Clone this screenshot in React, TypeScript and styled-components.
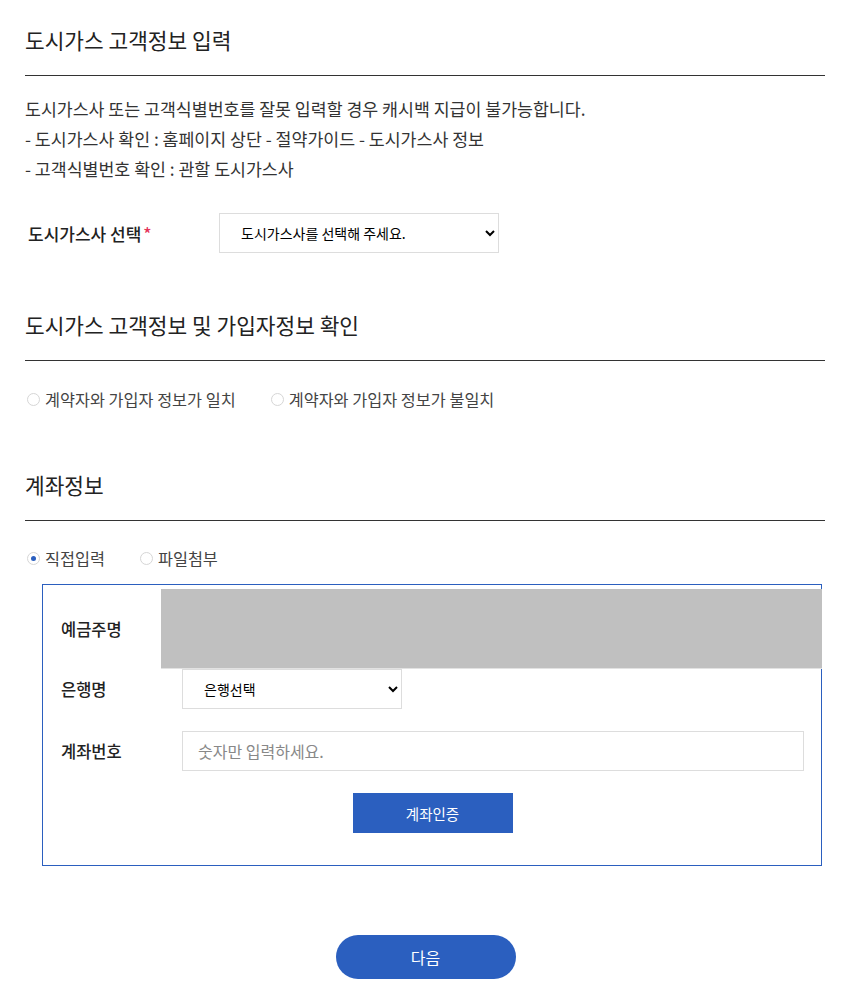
import React from 'react';
import styled, { createGlobalStyle } from 'styled-components';

const GlobalStyle = createGlobalStyle`
  body {
    margin: 0;
    background: #fff;
    font-family: 'Noto Sans CJK KR', 'Noto Sans', sans-serif;
    color: #333;
  }
`;

const Page = styled.div`
  width: 800px;
  padding: 0 26px 20px 25px;
`;

const SectionTitle = styled.h2<{ top: number }>`
  margin: ${p => p.top}px 0 0;
  padding-bottom: 20px;
  border-bottom: 1px solid #333;
  font-size: 21.4px;
  font-weight: 400;
  line-height: 30px;
  color: #222;
`;

const Notice = styled.div`
  margin-top: 18px;
  font-size: 17.3px;
  line-height: 30px;
  color: #333;
`;

const FieldRow = styled.div`
  display: flex;
  align-items: center;
  margin-top: 29px;
`;

const FieldLabel = styled.label`
  width: 191px;
  padding-left: 3px;
  font-size: 17px;
  font-weight: 500;
  color: #222;
`;

const Required = styled.span`
  color: #e4335a;
  margin-left: 2px;
`;

const Select = styled.select<{ w: number }>`
  width: ${p => p.w}px;
  height: 40px;
  padding: 0 12px 0 17px;
  border: 1px solid #ddd;
  background: #fff;
  font-family: 'Noto Sans CJK KR', sans-serif;
  font-size: 14px;
  color: #000;
  outline: none;
`;

const RadioGroup = styled.div<{ top: number }>`
  display: flex;
  align-items: center;
  margin-top: ${p => p.top}px;
  height: 24px;
`;

const RadioOption = styled.label<{ gap: number }>`
  display: flex;
  align-items: center;
  margin-right: ${p => p.gap}px;
  font-size: 16.3px;
  color: #444;
  cursor: pointer;
`;

const RadioMark = styled.span<{ checked?: boolean }>`
  width: 13px;
  height: 13px;
  margin: 0 5px 0 2px;
  box-sizing: border-box;
  border: 1px solid #d6d6d6;
  border-radius: 50%;
  display: flex;
  align-items: center;
  justify-content: center;
  &::after {
    content: '';
    width: 5px;
    height: 5px;
    border-radius: 50%;
    background: ${p => (p.checked ? '#2b5fbf' : 'transparent')};
  }
`;

const AccountBox = styled.div`
  margin: 14px 3px 0 17px;
  border: 1px solid #2b5fbf;
  padding: 4px 17px 32px 18px;
`;

const AccountRow = styled.div<{ top?: number }>`
  display: flex;
  align-items: center;
  margin-top: ${p => p.top ?? 0}px;
`;

const AccountLabel = styled.span`
  width: 121px;
  flex-shrink: 0;
  font-size: 16.5px;
  font-weight: 500;
  color: #222;
`;

const Masked = styled.div`
  flex: 1;
  height: 79px;
  margin: 0 -18px 0 -21px;
  background: #c0c0c0;
  border-bottom: 1px solid #e2e2e2;
`;

const TextInput = styled.input`
  flex: 1;
  height: 40px;
  box-sizing: border-box;
  padding: 0 15px;
  border: 1px solid #ddd;
  font-family: 'Noto Sans CJK KR', sans-serif;
  font-size: 16px;
  outline: none;
  &::placeholder {
    color: #888;
  }
`;

const ButtonRow = styled.div`
  display: flex;
  justify-content: center;
  margin-top: 22px;
`;

const VerifyButton = styled.button`
  width: 160px;
  height: 40px;
  border: 0;
  background: #2b5fbf;
  color: #fff;
  font-family: 'Noto Sans CJK KR', sans-serif;
  font-size: 14.5px;
  cursor: pointer;
`;

const Footer = styled.div`
  display: flex;
  justify-content: center;
  margin: 69px 0 0;
  padding-left: 1px;
`;

const NextButton = styled.button`
  width: 180px;
  height: 44px;
  border: 0;
  border-radius: 22px;
  background: #2b5fbf;
  color: #fff;
  font-family: 'Noto Sans CJK KR', sans-serif;
  font-size: 16px;
  cursor: pointer;
`;

function App() {
  return (
    <Page>
      <GlobalStyle />
      <SectionTitle top={25}>도시가스 고객정보 입력</SectionTitle>
      <Notice>
        도시가스사 또는 고객식별번호를 잘못 입력할 경우 캐시백 지급이 불가능합니다.
        <br />- 도시가스사 확인 : 홈페이지 상단 - 절약가이드 - 도시가스사 정보
        <br />- 고객식별번호 확인 : 관할 도시가스사
      </Notice>
      <FieldRow>
        <FieldLabel>
          도시가스사 선택<Required>*</Required>
        </FieldLabel>
        <Select w={280} defaultValue="">
          <option value="">도시가스사를 선택해 주세요.</option>
        </Select>
      </FieldRow>

      <SectionTitle top={57}>도시가스 고객정보 및 가입자정보 확인</SectionTitle>
      <RadioGroup top={26}>
        <RadioOption gap={33}>
          <RadioMark />
          계약자와 가입자 정보가 일치
        </RadioOption>
        <RadioOption gap={33}>
          <RadioMark />
          계약자와 가입자 정보가 불일치
        </RadioOption>
      </RadioGroup>

      <SectionTitle top={59}>계좌정보</SectionTitle>
      <RadioGroup top={25}>
        <RadioOption gap={33}>
          <RadioMark checked />
          직접입력
        </RadioOption>
        <RadioOption gap={33}>
          <RadioMark />
          파일첨부
        </RadioOption>
      </RadioGroup>

      <AccountBox>
        <AccountRow>
          <AccountLabel>예금주명</AccountLabel>
          <Masked />
        </AccountRow>
        <AccountRow>
          <AccountLabel>은행명</AccountLabel>
          <Select w={220} defaultValue="">
            <option value="">은행선택</option>
          </Select>
        </AccountRow>
        <AccountRow top={22}>
          <AccountLabel>계좌번호</AccountLabel>
          <TextInput placeholder="숫자만 입력하세요." />
        </AccountRow>
        <ButtonRow>
          <VerifyButton>계좌인증</VerifyButton>
        </ButtonRow>
      </AccountBox>

      <Footer>
        <NextButton>다음</NextButton>
      </Footer>
    </Page>
  );
}

export default App;
